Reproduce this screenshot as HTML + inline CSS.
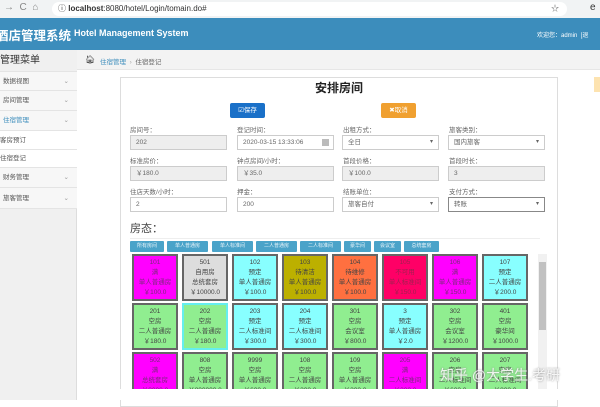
<!DOCTYPE html>
<html><head><meta charset="utf-8"><style>
*{box-sizing:border-box;margin:0;padding:0}
body{width:600px;height:400px;overflow:hidden;background:#fff;font-family:"Liberation Sans","Noto Sans CJK SC",sans-serif;position:relative;font-size:7px;color:#555}
.abs{position:absolute}
#bar{left:0;top:0;width:600px;height:18px;background:#f1f3f4}
#url{left:52px;top:2px;width:515px;height:14px;background:#fff;border-radius:7px;font-size:8px;line-height:14px;padding-left:6px;color:#333}
#hdr{left:0;top:18px;width:600px;height:32px;background:#3c8dbc}
#side{left:0;top:50px;width:77px;height:350px;background:#f0f0f0;border-right:1px solid #ddd}
.si{position:absolute;left:0;width:77px;border-bottom:1px solid #e4e4e4;background:#f7f7f7;font-size:6.5px;color:#555;padding-left:3px}
.si i{position:absolute;right:8px;font-style:normal;color:#999}
#bc{left:77px;top:50px;width:523px;height:20px;background:#f3f3f3;border-bottom:1px solid #e6e6e6}
#panel{left:120px;top:77px;width:438px;height:330px;border:1px solid #ddd;background:#fff}
.lbl{position:absolute;font-size:6.5px;color:#666}
.inp{position:absolute;width:97px;height:15px;border:1px solid #ccc;font-size:6.5px;line-height:13px;padding-left:5px;color:#666;background:#fff}
.ro{background:#eee}
.sel:after{content:"▾";position:absolute;right:5px;font-size:6px}
.fb{position:absolute;top:241px;height:11px;background:#4aa3c9;color:#e8f4fa;font-size:5px;line-height:11px;text-align:center;border-radius:1px}
.rm{position:absolute;width:46px;height:47px;border:2px solid #666;font-size:6.5px;text-align:center;line-height:10px;padding-top:2px;color:#444}
</style></head><body>
<div id="bar" class="abs"><span class="abs" style="left:4px;top:2px;font-size:10px;color:#888">→ &nbsp;C &nbsp;⌂</span><div id="url" class="abs">ⓘ <b>localhost</b>:8080/hotel/Login/tomain.do#<span style="float:right;margin-right:8px;color:#666">☆</span></div><span class="abs" style="left:590px;top:2px;font-size:10px;color:#333">e</span></div>
<div id="hdr" class="abs"><span class="abs" style="left:-4px;top:7px;color:#fff;font-size:12.5px;font-weight:bold;white-space:nowrap">酒店管理系统</span><span class="abs" style="left:74px;top:10px;color:#fff;font-size:9px;font-weight:bold">Hotel Management System</span><span class="abs" style="left:537px;top:12px;color:#fff;font-size:6px">欢迎您：admin &nbsp;[退</span></div>
<div id="side" class="abs">
<div class="si" style="top:0;height:22px;font-size:10px;background:#f0f0f0;padding-left:0;line-height:22px;color:#333">管理菜单</div>
<div class="si" style="top:22px;height:19px;line-height:19px">数据视图<i>⌄</i></div>
<div class="si" style="top:41px;height:20px;line-height:20px">房间管理<i>⌄</i></div>
<div class="si" style="top:61px;height:20px;line-height:20px;color:#3c8dbc">住宿管理<i>⌄</i></div>
<div class="si" style="top:81px;height:19px;line-height:19px;background:#fff;padding-left:0">客房预订</div>
<div class="si" style="top:100px;height:18px;line-height:18px;background:#fff;padding-left:0">住宿登记</div>
<div class="si" style="top:118px;height:20px;line-height:20px">财务管理<i>⌄</i></div>
<div class="si" style="top:138px;height:21px;line-height:21px">旅客管理<i>⌄</i></div>
</div>
<div id="bc" class="abs"><span class="abs" style="left:8px;top:5px;font-size:8px;color:#444">🏠︎</span><span class="abs" style="left:23px;top:6px;font-size:6.5px;color:#3c8dbc">住宿管理 <span style="color:#aaa">&nbsp;›&nbsp;</span> <span style="color:#666">住宿登记</span></span></div>
<div class="abs" style="left:594px;top:77px;width:6px;height:15px;background:#fde3b0"></div>
<div id="panel" class="abs"></div>
<div class="abs" style="left:120px;top:79px;width:438px;text-align:center;font-size:12px;font-weight:bold;color:#222">安排房间</div>
<div class="abs" style="left:230px;top:103px;width:35px;height:15px;background:#1a70c8;color:#fff;font-size:6.5px;line-height:15px;text-align:center;border-radius:2px">☑保存</div>
<div class="abs" style="left:381px;top:103px;width:35px;height:15px;background:#f0a030;color:#fff;font-size:6.5px;line-height:15px;text-align:center;border-radius:2px">✖取消</div>
<div class="lbl" style="left:130px;top:124px">房间号：</div><div class="lbl" style="left:237px;top:124px">登记时间：</div><div class="lbl" style="left:343px;top:124px">出租方式：</div><div class="lbl" style="left:449px;top:124px">旅客类别：</div>
<div class="inp ro" style="left:130px;top:135px">202</div><div class="inp" style="left:237px;top:135px">2020-03-15 13:33:06<span style="position:absolute;right:4px;top:3px;width:7px;height:7px;background:#bbb"></span></div><div class="inp sel" style="left:342px;top:135px">全日</div><div class="inp sel" style="left:448px;top:135px">国内旅客</div>
<div class="lbl" style="left:130px;top:155px">标准房价：</div><div class="lbl" style="left:237px;top:155px">钟点房间/小时：</div><div class="lbl" style="left:343px;top:155px">首段价格：</div><div class="lbl" style="left:449px;top:155px">首段时长：</div>
<div class="inp ro" style="left:130px;top:166px">￥180.0</div><div class="inp ro" style="left:237px;top:166px">￥35.0</div><div class="inp ro" style="left:342px;top:166px">￥100.0</div><div class="inp ro" style="left:448px;top:166px">3</div>
<div class="lbl" style="left:130px;top:186px">住店天数/小时：</div><div class="lbl" style="left:237px;top:186px">押金：</div><div class="lbl" style="left:343px;top:186px">结账单位：</div><div class="lbl" style="left:449px;top:186px">支付方式：</div>
<div class="inp" style="left:130px;top:197px">2</div><div class="inp" style="left:237px;top:197px">200</div><div class="inp sel" style="left:342px;top:197px">旅客自付</div><div class="inp sel" style="left:448px;top:197px;border-color:#888">转账</div>
<div class="abs" style="left:130px;top:220px;font-size:11px;color:#444">房态：</div>
<div class="abs" style="left:130px;top:238px;width:410px;height:1px;background:#eee"></div>
<div class="fb" style="left:130px;width:34px">所有房间</div><div class="fb" style="left:167px;width:41px">单人普通房</div><div class="fb" style="left:212px;width:41px">单人标准间</div><div class="fb" style="left:256px;width:41px">二人普通房</div><div class="fb" style="left:300px;width:41px">二人标准间</div><div class="fb" style="left:344px;width:27px">豪华间</div><div class="fb" style="left:374px;width:27px">会议室</div><div class="fb" style="left:404px;width:35px">总统套房</div>
<div class="abs" style="left:538px;top:254px;width:9px;height:146px;background:#f1f1f1"></div><div class="abs" style="left:539px;top:262px;width:7px;height:68px;background:#c1c1c1"></div>
<div class="rm" style="left:132px;top:254px;background:#f0f;color:#7a2a7a">101<br>满<br>单人普通房<br>￥100.0</div>
<div class="rm" style="left:182px;top:254px;background:#ddd">501<br>自用房<br>总统套房<br>￥10000.0</div>
<div class="rm" style="left:232px;top:254px;background:#8ff">102<br>预定<br>单人普通房<br>￥100.0</div>
<div class="rm" style="left:282px;top:254px;background:#bcb000">103<br>待清洁<br>单人普通房<br>￥100.0</div>
<div class="rm" style="left:332px;top:254px;background:#ff7040">104<br>待维修<br>单人普通房<br>￥100.0</div>
<div class="rm" style="left:382px;top:254px;background:#f06;color:#a02050">105<br>不可用<br>单人标准间<br>￥150.0</div>
<div class="rm" style="left:432px;top:254px;background:#f0f;color:#7a2a7a">106<br>满<br>单人普通房<br>￥150.0</div>
<div class="rm" style="left:482px;top:254px;background:#8ff">107<br>预定<br>二人普通房<br>￥200.0</div>
<div class="rm" style="left:132px;top:303px;background:#90ee90">201<br>空房<br>二人普通房<br>￥180.0</div>
<div class="rm" style="left:182px;top:303px;background:#90ee90;border-color:#6ee">202<br>空房<br>二人普通房<br>￥180.0</div>
<div class="rm" style="left:232px;top:303px;background:#8ff">203<br>预定<br>二人标准间<br>￥300.0</div>
<div class="rm" style="left:282px;top:303px;background:#8ff">204<br>预定<br>二人标准间<br>￥300.0</div>
<div class="rm" style="left:332px;top:303px;background:#90ee90">301<br>空房<br>会议室<br>￥800.0</div>
<div class="rm" style="left:382px;top:303px;background:#8ff">3<br>预定<br>单人普通房<br>￥2.0</div>
<div class="rm" style="left:432px;top:303px;background:#90ee90">302<br>空房<br>会议室<br>￥1200.0</div>
<div class="rm" style="left:482px;top:303px;background:#90ee90">401<br>空房<br>豪华间<br>￥1000.0</div>
<div class="rm" style="left:132px;top:352px;background:#f0f;color:#7a2a7a">502<br>满<br>总统套房<br>￥8000.0</div>
<div class="rm" style="left:182px;top:352px;background:#90ee90">808<br>空房<br>单人普通房<br>￥800000.0</div>
<div class="rm" style="left:232px;top:352px;background:#90ee90">9999<br>空房<br>单人普通房<br>￥600.0</div>
<div class="rm" style="left:282px;top:352px;background:#90ee90">108<br>空房<br>二人普通房<br>￥200.0</div>
<div class="rm" style="left:332px;top:352px;background:#90ee90">109<br>空房<br>单人普通房<br>￥200.0</div>
<div class="rm" style="left:382px;top:352px;background:#f0f;color:#7a2a7a">205<br>满<br>二人标准间<br>￥300.0</div>
<div class="rm" style="left:432px;top:352px;background:#90ee90">206<br>空房<br>二人标准间<br>￥600.0</div>
<div class="rm" style="left:482px;top:352px;background:#90ee90">207<br>空房<br>二人标准间<br>￥800.0</div>
<div class="abs" style="left:120px;top:389px;width:480px;height:11px;background:#fff"></div>
<div class="abs" style="left:440px;top:365px;font-size:14px;color:rgba(255,255,255,0.85);text-shadow:0 0 2px #888">知乎 @大学生.考研</div>
</body></html>
